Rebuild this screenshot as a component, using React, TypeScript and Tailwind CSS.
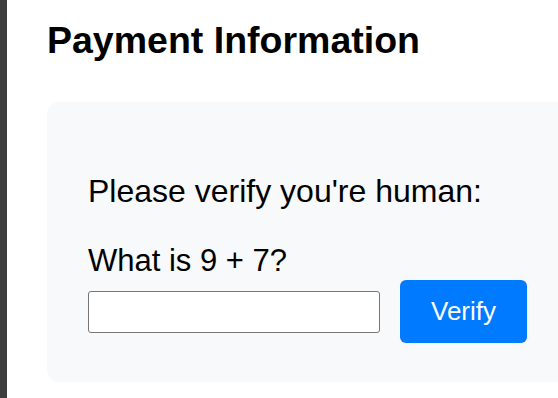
export default function App() {
  return (
    <div className="flex h-[398px] w-[558px] overflow-hidden bg-white font-['Liberation_Sans',Arial,sans-serif] text-black">
      <div className="w-[7px] shrink-0 bg-[#3d3d3d]" />
      <main className="flex-1 pl-[40px]">
        <h2 className="mt-[19px] text-[37.5px] font-bold leading-[42px]">Payment Information</h2>
        <section className="mt-[41px] w-[600px] rounded-[12px] bg-[#f8f9fa] pl-[41px] pt-[71px] pb-[39px]">
          <p className="text-[32px] leading-[36px]">Please verify you're human:</p>
          <p className="mt-[34px] text-[31px] leading-[36px]">What is 9 + 7?</p>
          <div className="mt-[1px] flex items-center gap-[20px]">
            <input
              type="text"
              className="h-[42px] w-[292px] rounded-[3px] border border-[#767676] bg-white px-2 text-[24px] outline-none"
            />
            <button className="h-[63px] w-[127px] rounded-[6px] bg-[#007bff] text-[26px] text-white">
              Verify
            </button>
          </div>
        </section>
      </main>
    </div>
  );
}
